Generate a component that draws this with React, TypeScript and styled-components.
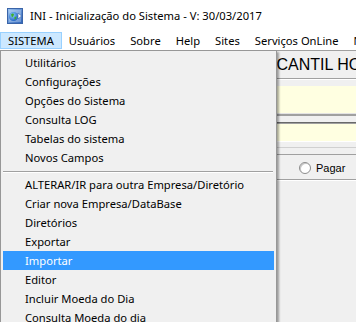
import React from "react";
import styled, { createGlobalStyle } from "styled-components";

const Global = createGlobalStyle`
  html, body { margin: 0; padding: 0; background: #f0f0f0; }
  * { box-sizing: border-box; }
`;

const UI_FONT = `"Noto Sans", "Open Sans", sans-serif`;

const Window = styled.div`
  position: relative;
  width: 356px;
  height: 322px;
  overflow: hidden;
  background: #f0f0f0;
  font-family: ${UI_FONT};
  font-size: 11.2px;
  color: #000;
`;

const TitleBar = styled.div`
  height: 30px;
  background: #fff;
  display: flex;
  align-items: center;
  padding-left: 7px;
  padding-top: 1px;
  gap: 7px;
  white-space: nowrap;
`;

const TitleText = styled.span`
  font-size: 11.2px;
  color: #000;
`;

const MenuBar = styled.div`
  height: 20px;
  background: #fff;
  display: flex;
  align-items: center;
  white-space: nowrap;
`;

const MenuBarItem = styled.div<{ $active?: boolean }>`
  height: 17px;
  margin-top: 1px;
  display: flex;
  align-items: center;
  padding: 0 7px;
  background: ${(p) => (p.$active ? "#cce8ff" : "transparent")};
  border: 1px solid ${(p) => (p.$active ? "#99d1ff" : "transparent")};
  margin-left: ${(p) => (p.$active ? "0" : "-1px")};
`;

const Client = styled.div`
  border-top: 1px solid #a0a0a0;
  display: flex;
  flex-direction: column;
`;

const Header = styled.div`
  height: 27px;
  display: flex;
  align-items: center;
  padding-left: 241px;
  font-family: "Liberation Sans", Arial, sans-serif;
  font-size: 16px;
  white-space: nowrap;
`;

const Rule = styled.div<{ $color: string }>`
  height: 1px;
  background: ${(p) => p.$color};
`;

const Gap = styled.div<{ $h: number }>`
  height: ${(p) => p.$h}px;
`;

const Field = styled.div<{ $h: number }>`
  height: ${(p) => p.$h}px;
  background: #ffffe1;
`;

const RadioRow = styled.div`
  height: 24px;
  display: flex;
  align-items: center;
  padding-left: 299px;
  padding-top: 2px;
  gap: 5px;
  font-family: "Liberation Sans", Arial, sans-serif;
  font-size: 11px;
`;

const RadioCircle = styled.span`
  width: 12px;
  height: 12px;
  border-radius: 50%;
  background: #fff;
  border: 1px solid #8c8c8c;
  box-shadow: inset 1px 1px 0 #c8c8c8;
  display: inline-block;
`;

const Popup = styled.div`
  position: absolute;
  left: 0;
  top: 50px;
  width: 277px;
  height: 290px;
  background: #f0f0f0;
  border: 1px solid #979797;
  padding: 2px;
  box-shadow: 2px 2px 2px rgba(0, 0, 0, 0.35);
  display: flex;
  flex-direction: column;
`;

const PopupItem = styled.div<{ $selected?: boolean }>`
  height: 19px;
  flex: none;
  display: flex;
  align-items: center;
  padding-left: 22px;
  white-space: nowrap;
  background: ${(p) => (p.$selected ? "#3399ff" : "transparent")};
  color: ${(p) => (p.$selected ? "#fff" : "#000")};
`;

const Separator = styled.div`
  flex: none;
  height: 8px;
  display: flex;
  align-items: center;
  padding-right: 1px;
  &::after {
    content: "";
    display: block;
    width: 100%;
    height: 1px;
    background: #a0a0a0;
    box-shadow: 0 1px 0 #fff;
  }
`;

const AppIcon = () => (
  <svg width="16" height="16" viewBox="0 0 16 16">
    <defs>
      <linearGradient id="ig" x1="0" y1="0" x2="1" y2="1">
        <stop offset="0" stopColor="#9cc4f0" />
        <stop offset="1" stopColor="#2d62b8" />
      </linearGradient>
      <radialGradient id="gg" cx="0.4" cy="0.35" r="0.7">
        <stop offset="0" stopColor="#8fd0ff" />
        <stop offset="1" stopColor="#1c5fc2" />
      </radialGradient>
    </defs>
    <rect x="0.5" y="0.5" width="15" height="15" fill="url(#ig)" stroke="#3a64a8" />
    <rect x="2" y="2" width="12" height="12" fill="#cfe2f8" opacity="0.35" />
    <circle cx="6.5" cy="8.5" r="4.5" fill="url(#gg)" />
    <path d="M4 6.5 Q5.5 5 7 6 L6.5 8 L5 9.5 Z M7.5 9 L9.5 8.5 L9 11 L7.5 11.5 Z" fill="#3fae2a" />
    <path d="M11 5 L14.5 8 L11 11 Z" fill="#fff" stroke="#2d5fa8" strokeWidth="0.6" />
  </svg>
);

const menuTop = ["Utilitários", "Configurações", "Opções do Sistema", "Consulta LOG", "Tabelas do sistema", "Novos Campos"];
const menuBottom = [
  "ALTERAR/IR para outra Empresa/Diretório",
  "Criar nova Empresa/DataBase",
  "Diretórios",
  "Exportar",
  "Importar",
  "Editor",
  "Incluir Moeda do Dia",
  "Consulta Moeda do dia",
];
const bar = ["Usuários", "Sobre", "Help", "Sites", "Serviços OnLine", "Notas"];

export default function App() {
  return (
    <>
      <Global />
      <Window>
        <TitleBar>
          <AppIcon />
          <TitleText>INI - Inicialização do Sistema - V: 30/03/2017</TitleText>
        </TitleBar>
        <MenuBar>
          <MenuBarItem $active>SISTEMA</MenuBarItem>
          {bar.map((b) => (
            <MenuBarItem key={b}>{b}</MenuBarItem>
          ))}
        </MenuBar>
        <Client>
          <Header>MERCANTIL HOLDING</Header>
          <Rule $color="#a0a0a0" />
          <Rule $color="#ffffff" />
          <Gap $h={6} />
          <Field $h={27} />
          <Rule $color="#e3e3e3" />
          <Rule $color="#a0a0a0" />
          <Rule $color="#a0a0a0" />
          <Gap $h={6} />
          <Rule $color="#696969" />
          <Rule $color="#a0a0a0" />
          <Field $h={17} />
          <Rule $color="#ffffff" />
          <Gap $h={5} />
          <Rule $color="#d0d0d0" />
          <Gap $h={6} />
          <Rule $color="#a0a0a0" />
          <RadioRow>
            <RadioCircle />
            <span>Pagar</span>
          </RadioRow>
          <Rule $color="#a0a0a0" />
          <Rule $color="#ffffff" />
        </Client>
        <Popup>
          {menuTop.map((m) => (
            <PopupItem key={m}>{m}</PopupItem>
          ))}
          <Separator />
          {menuBottom.map((m) => (
            <PopupItem key={m} $selected={m === "Importar"}>
              {m}
            </PopupItem>
          ))}
        </Popup>
      </Window>
    </>
  );
}
